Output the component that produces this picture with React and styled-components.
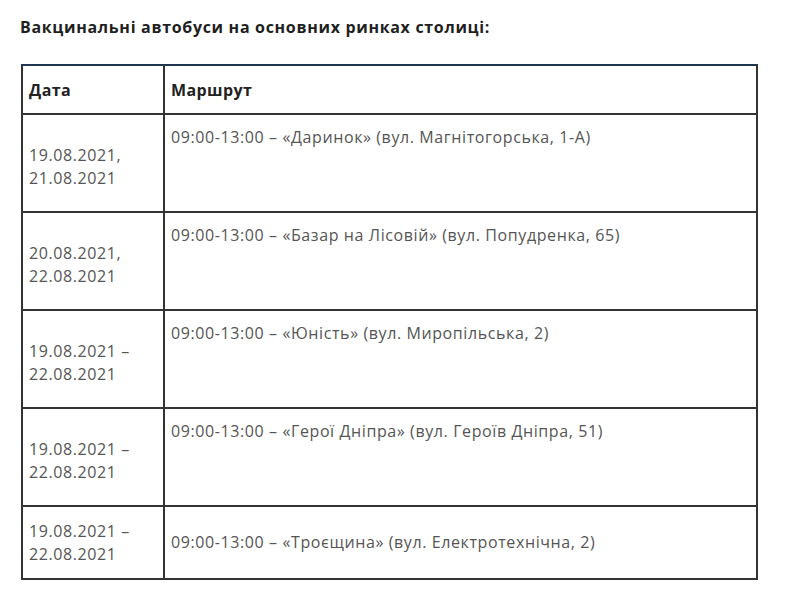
import React from 'react'
import styled, { createGlobalStyle } from 'styled-components'

const GlobalStyle = createGlobalStyle`
  body {
    margin: 0;
    background: #fff;
    font-family: "Open Sans", "Liberation Sans", sans-serif;
  }
`

const Page = styled.section`
  padding: 17px 0 0 20px;
`

const Title = styled.h4`
  margin: 0 0 27px;
  font-size: 16px;
  line-height: 20px;
  font-weight: 700;
  letter-spacing: 0.68px;
  color: #1f1f1f;
`

const Schedule = styled.table`
  width: 737px;
  margin-left: 1px;
  border-collapse: collapse;
  border-top: 2px solid #1f3550;
  border-bottom: 2px solid #1f3550;
`

const HeadCell = styled.th`
  height: 47px;
  padding: 0 6px;
  border: 2px solid #333;
  border-top-color: #1f3550;
  text-align: left;
  font-size: 16px;
  font-weight: 700;
  letter-spacing: 0.4px;
  color: #222;
`

const Cell = styled.td`
  height: ${(p) => p.$height}px;
  padding: 6px 6px;
  border: 2px solid #333;
  vertical-align: ${(p) => (p.$top ? 'top' : 'middle')};
  font-size: 16px;
  line-height: 23px;
  letter-spacing: 0.6px;
  color: #555;
`

const DateCell = styled(Cell)`
  width: 128px;
  padding: ${(p) => (p.$last ? '6px 6px' : '10px 6px 2px')};
`

const Route = styled.p`
  margin: ${(p) => (p.$top ? '5px 0 0' : '0')};
`

const rows = [
  { date: ['19.08.2021,', '21.08.2021'], route: '09:00-13:00 – «Даринок» (вул. Магнітогорська, 1-А)' },
  { date: ['20.08.2021,', '22.08.2021'], route: '09:00-13:00 – «Базар на Лісовій» (вул. Попудренка, 65)' },
  { date: ['19.08.2021 –', '22.08.2021'], route: '09:00-13:00 – «Юність» (вул. Миропільська, 2)' },
  { date: ['19.08.2021 –', '22.08.2021'], route: '09:00-13:00 – «Герої Дніпра» (вул. Героїв Дніпра, 51)' },
  { date: ['19.08.2021 –', '22.08.2021'], route: '09:00-13:00 – «Троєщина» (вул. Електротехнічна, 2)', last: true }
]

export default function App () {
  return (
    <Page>
      <GlobalStyle />
      <Title>Вакцинальні автобуси на основних ринках столиці:</Title>
      <Schedule>
        <thead>
          <tr>
            <HeadCell style={{ width: 128 }}>Дата</HeadCell>
            <HeadCell>Маршрут</HeadCell>
          </tr>
        </thead>
        <tbody>
          {rows.map((row, i) => (
            <tr key={i}>
              <DateCell $height={row.last ? 59 : 84} $last={row.last}>
                {row.date[0]}<br />{row.date[1]}
              </DateCell>
              <Cell $height={row.last ? 59 : 84} $top={!row.last}>
                <Route $top={!row.last}>{row.route}</Route>
              </Cell>
            </tr>
          ))}
        </tbody>
      </Schedule>
    </Page>
  )
}
